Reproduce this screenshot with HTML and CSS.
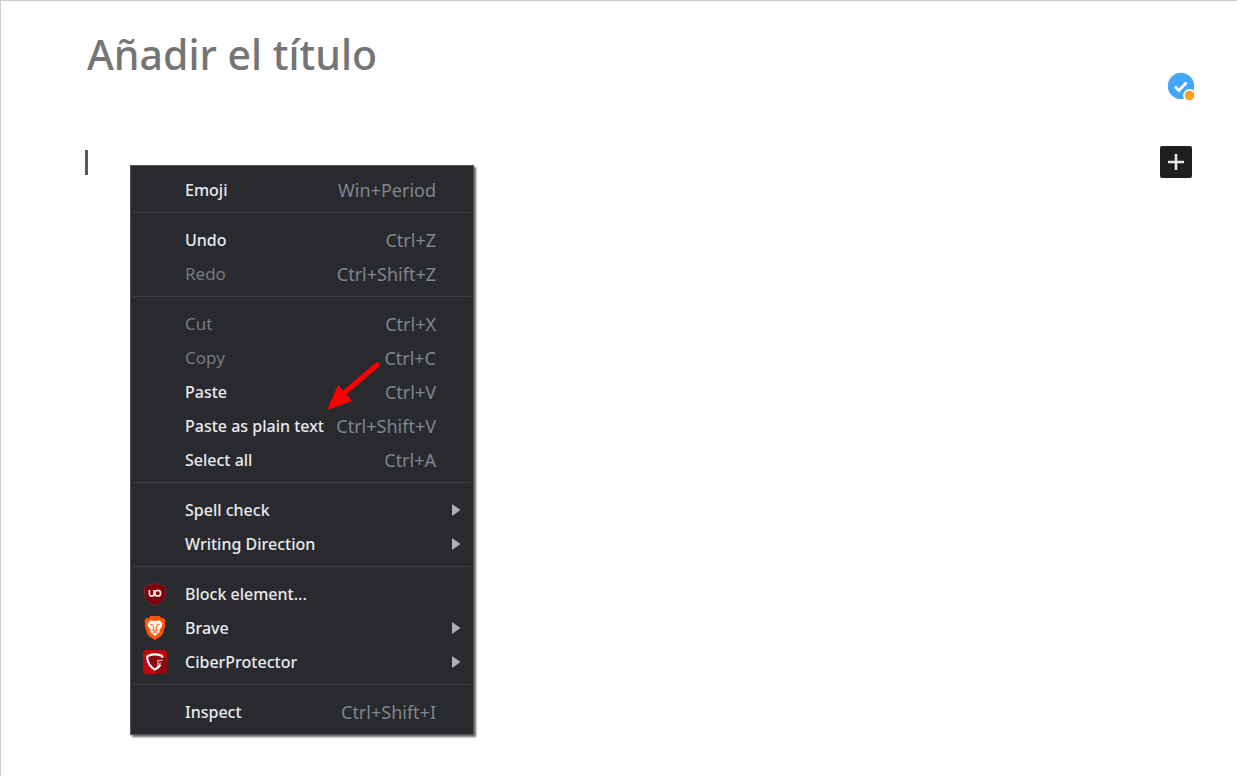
FILE: index.html
```html
<!DOCTYPE html>
<html lang="es">
<head>
<meta charset="utf-8">
<meta name="viewport" content="width=device-width, initial-scale=1">
<title>Editor</title>
<link rel="stylesheet" href="styles.css">
</head>
<body>
<main class="editor">
  <div class="title-row">
    <input class="title-input" type="text" aria-label="Título" placeholder="Añadir el título">
    <button class="checker" type="button" aria-label="Corrector">
      <svg width="30" height="30" viewBox="0 0 30 30">
        <circle cx="15" cy="14" r="13.2" fill="#43a6f8"/>
        <path d="M9 14.500l4 4 7.500-8" fill="none" stroke="#fff" stroke-width="2.800"/>
        <circle cx="23.5" cy="23.500" r="6.5" fill="#fff"/>
        <circle cx="23.5" cy="23.500" r="4.8" fill="#f9a127"/>
      </svg>
    </button>
  </div>
  <div class="block-row">
    <div class="caret" role="textbox" aria-label="Bloque vacío"></div>
    <button class="add-block" type="button" aria-label="Añadir bloque">
      <svg width="32" height="32" viewBox="0 0 32 32"><path d="M16 8v16M8 16h16" stroke="#e6e6e6" stroke-width="2.600"/></svg>
    </button>
  </div>
</main>

<div class="menu" role="menu">
  <button class="item" type="button" role="menuitem"><span class="label">Emoji</span><span class="key">Win+Period</span></button>
  <hr class="rule">
  <button class="item" type="button" role="menuitem"><span class="label">Undo</span><span class="key">Ctrl+Z</span></button>
  <button class="item" type="button" role="menuitem" disabled><span class="label">Redo</span><span class="key">Ctrl+Shift+Z</span></button>
  <hr class="rule">
  <button class="item" type="button" role="menuitem" disabled><span class="label">Cut</span><span class="key">Ctrl+X</span></button>
  <button class="item" type="button" role="menuitem" disabled><span class="label">Copy</span><span class="key">Ctrl+C</span></button>
  <button class="item" type="button" role="menuitem"><span class="label">Paste</span><span class="key">Ctrl+V</span></button>
  <button class="item" type="button" role="menuitem"><span class="label">Paste as plain text</span><span class="key">Ctrl+Shift+V</span></button>
  <button class="item" type="button" role="menuitem"><span class="label">Select all</span><span class="key">Ctrl+A</span></button>
  <hr class="rule">
  <button class="item" type="button" role="menuitem" aria-haspopup="menu"><span class="label">Spell check</span><svg class="more" viewBox="0 0 9 12"><path d="M0 0l8.5 6L0 12z"/></svg></button>
  <button class="item" type="button" role="menuitem" aria-haspopup="menu"><span class="label">Writing Direction</span><svg class="more" viewBox="0 0 9 12"><path d="M0 0l8.5 6L0 12z"/></svg></button>
  <hr class="rule">
  <button class="item" type="button" role="menuitem">
    <svg class="icon" viewBox="0 0 24 24">
      <path d="M12 .6C9.2 2.8 5.6 3.9 1.6 4v8.400c0 5.400 5 8.700 10.400 11 5.400-2.300 10.400-5.600 10.400-11V4C18.400 3.900 14.800 2.800 12 .6z" fill="#800008" stroke="#6a3238" stroke-width=".8"/>
      <path d="M6.400 8v3.700a2.400 2.400 0 0 0 4.800 0V8" fill="none" stroke="#f3e8e8" stroke-width="1.700"/>
      <path d="M11.200 8v6" stroke="#f3e8e8" stroke-width="1.500"/>
      <circle cx="14.800" cy="11.200" r="2.800" fill="none" stroke="#f3e8e8" stroke-width="1.700"/>
    </svg>
    <span class="label">Block element...</span></button>
  <button class="item" type="button" role="menuitem" aria-haspopup="menu">
    <svg class="icon" viewBox="0 0 24 24">
      <path d="M7.500 0h9l2.200 2.300 2.200-.2 1.700 2.900-.8 2.600.6 2-2.600 8.200-2 2.600L12 24l-5.800-3.600-2-2.600L1.600 9.600l.6-2L1.400 5l1.700-2.900 2.200.2z" fill="#fb5408"/>
      <path d="M7.300 4.200l4.700.8 4.700-.8 2.700 3.300-.4 2.900-2.600 3.700.4 1.800-4.800 4-4.800-4 .4-1.800L5 10.400l-.4-2.900z" fill="#fff4ea"/>
      <path d="M7.300 8.300l3 .8M16.700 8.300l-3 .8M10.200 9.500l.6 3.300-1.200 1.200 2.400 1.300 2.400-1.300-1.200-1.200.6-3.300M9.600 17.200l2.400-1.400 2.400 1.400" fill="none" stroke="#fb7133" stroke-width="1.100"/>
    </svg>
    <span class="label">Brave</span><svg class="more" viewBox="0 0 9 12"><path d="M0 0l8.500 6L0 12z"/></svg></button>
  <button class="item" type="button" role="menuitem" aria-haspopup="menu">
    <svg class="icon" viewBox="0 0 24 24">
      <rect width="24" height="24" rx="4" fill="#c5050d"/>
      <path d="M20 6l4 4v10a4 4 0 0 1-4 4h-5l-4-4z" fill="#8b0711"/>
      <path d="M19.600 7.800c0-1.600-.5-2-1.700-2.400C13.800 4 10 4 6 5.400 4.700 5.800 4 6.400 4.200 7.800c.6 5 3 9.200 7.800 11.800 2.500-1.400 4.300-3 5.500-5" fill="#8b0711" stroke="#fff" stroke-width="2.100"/>
      <path d="M14.800 16v-5.600h5M14.800 13h3.600" fill="none" stroke="#d8a4a7" stroke-width="1.200"/>
    </svg>
    <span class="label">CiberProtector</span><svg class="more" viewBox="0 0 9 12"><path d="M0 0l8.500 6L0 12z"/></svg></button>
  <hr class="rule">
  <button class="item" type="button" role="menuitem"><span class="label">Inspect</span><span class="key">Ctrl+Shift+I</span></button>
  <svg class="arrow" viewBox="0 0 54 50" aria-hidden="true">
    <path d="M50 4L17 32" stroke="#f00" stroke-width="5" stroke-linecap="round"/>
    <path d="M0 49L11 24l14 16z" fill="#f00"/>
  </svg>
</div>
</body>
</html>
```
FILE: styles.css
```css
* {
  box-sizing: border-box;
}

body {
  margin: 0;
  min-height: 100vh;
  background: #fff;
  border-top: 1px solid #cdcdcd;
  border-left: 1px solid #cdcdcd;
  font-family: "Noto Sans", "Open Sans", sans-serif;
}

button {
  padding: 0;
  border: 0;
  background: none;
  font: inherit;
}

svg {
  display: block;
}

.editor {
  padding: 23px 41px 0 84px;
}

.title-row,
.block-row {
  display: flex;
  justify-content: space-between;
}

.title-row {
  align-items: flex-start;
}

.title-input {
  flex: 1;
  min-width: 0;
  height: 60px;
  padding: 0 2px;
  border: 0;
  outline: 0;
  background: none;
  color: #1e1e1e;
  font-family: inherit;
  font-size: 41px;
  font-weight: 500;
}

.title-input::placeholder {
  color: #757575;
  opacity: 1;
}

.checker {
  margin-top: 48px;
}

.block-row {
  align-items: center;
  margin-top: 44px;
  padding-right: 4px;
}

.caret {
  width: 3px;
  height: 25px;
  background: #55595c;
}

.add-block {
  border-radius: 2px;
  background: #1e1e1e;
}

.menu {
  position: absolute;
  top: 165px;
  left: 130px;
  padding: 7px 2px 5px;
  border: 1px solid #54565a;
  background: #292a2d;
  box-shadow: 2px 2px 2px rgba(0, 0, 0, .6);
}

.item {
  display: grid;
  grid-template-columns: 42px auto 1fr;
  align-items: center;
  width: 100%;
  min-width: 338px;
  height: 34px;
  padding: 0 35px 0 10px;
  color: #e8eaed;
  font-size: 16px;
  line-height: 24px;
  text-align: left;
}

.label {
  grid-column: 2;
  font-weight: 500;
  white-space: nowrap;
}

.key {
  grid-column: 3;
  color: #7f868c;
  font-size: 18px;
  text-align: right;
  white-space: nowrap;
}

.item:disabled {
  color: #777a7e;
}

.item:disabled .label {
  font-size: 17px;
  font-weight: 400;
}

.icon {
  grid-column: 1;
  width: 24px;
  height: 24px;
}

.more {
  grid-column: 3;
  justify-self: end;
  width: 9px;
  height: 12px;
  margin-right: -25px;
  fill: #adafb2;
}

.rule {
  height: 1px;
  margin: 5px 0 10px;
  border: 0;
  background: #3c3e42;
}

.arrow {
  position: absolute;
  top: 195px;
  left: 196px;
  width: 54px;
  height: 50px;
  fill: none;
}
```
